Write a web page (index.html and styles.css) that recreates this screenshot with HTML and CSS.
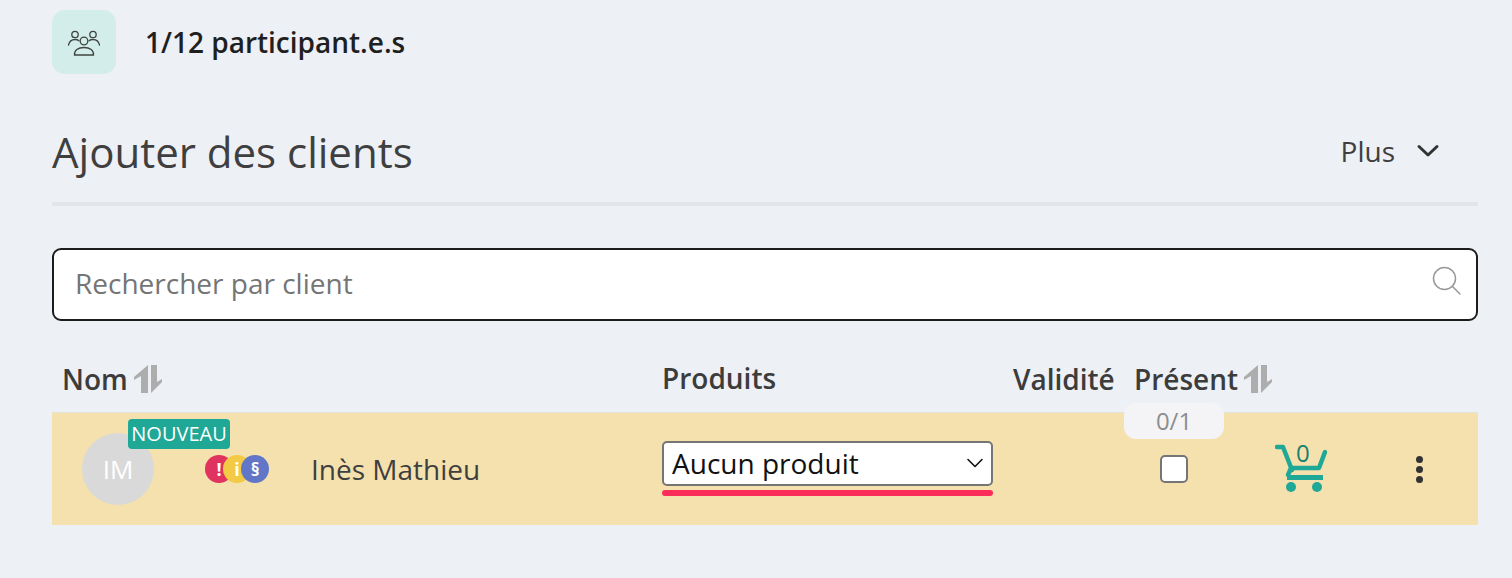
FILE: index.html
```html
<!DOCTYPE html>
<html lang="fr">

<head>
    <meta charset="UTF-8">
    <title>Ajouter des clients</title>
    <link rel="stylesheet" href="styles.css">
</head>

<body>
    <div class="participants">
        <div class="participants-icon">
            <svg width="34" height="30" viewBox="0 0 34 30" fill="none" stroke="#3f4442" stroke-width="1.3" stroke-linecap="round">
                <circle cx="8" cy="7.500" r="3.200"/>
                <circle cx="26" cy="7.500" r="3.200"/>
                <circle cx="17" cy="14" r="3.800"/>
                <path d="M1.500 18c.8-3.500 3.300-5.500 6.500-5.500 1.700 0 3 .4 4 1.200"/>
                <path d="M32.500 18c-.8-3.500-3.300-5.500-6.500-5.500-1.700 0-3 .4-4 1.200"/>
                <path d="M7.500 28c-.5-4.500 3.500-7.500 9.500-7.500s10 3 9.500 7.500z"/>
            </svg>
        </div>
        <span class="participants-count">1/12 participant.e.s</span>
    </div>

    <div class="title-bar">
        <h1>Ajouter des clients</h1>
        <div class="more">
            <span>Plus</span>
            <svg width="24" height="14" viewBox="0 0 24 14" fill="none" stroke="#333" stroke-width="3" stroke-linecap="round" stroke-linejoin="round">
                <path d="M3 2.500l9 8.500 9-8.500"/>
            </svg>
        </div>
    </div>

    <div class="search">
        <span class="search-placeholder">Rechercher par client</span>
        <svg width="30" height="30" viewBox="0 0 30 30" fill="none" stroke="#999" stroke-width="1.500" stroke-linecap="round">
            <circle cx="12.500" cy="12.500" r="11"/>
            <path d="M20.500 20.500l7.500 7.500"/>
        </svg>
    </div>

    <div class="table-head">
        <div class="col-name th">Nom
            <svg class="sort" width="28" height="28" viewBox="0 0 28 28" fill="#adadad">
                <path d="M14 0v28H7V11l-7 4v-3z"/>
                <path d="M17 0h6v17l5-3v3L17 28z"/>
            </svg>
        </div>
        <div class="col-product th">Produits</div>
        <div class="col-validity th">Validité</div>
        <div class="col-present th">Présent
            <svg class="sort" width="28" height="28" viewBox="0 0 28 28" fill="#adadad">
                <path d="M14 0v28H7V11l-7 4v-3z"/>
                <path d="M17 0h6v17l5-3v3L17 28z"/>
            </svg>
        </div>
    </div>

    <div class="client-row">
        <div class="col-name client">
            <div class="avatar">IM<span class="badge-new">NOUVEAU</span></div>
            <div class="flags">
                <span class="flag flag-red">!</span>
                <span class="flag flag-yellow">i</span>
                <span class="flag flag-blue">§</span>
            </div>
            <span class="client-name">Inès Mathieu</span>
        </div>
        <div class="col-product">
            <div class="select">
                <span>Aucun produit</span>
                <svg width="18" height="10" viewBox="0 0 18 10" fill="none" stroke="#111" stroke-width="1.600" stroke-linecap="round" stroke-linejoin="round">
                    <path d="M2 1.500l7 7 7-7"/>
                </svg>
            </div>
            <div class="select-error"></div>
        </div>
        <div class="col-validity"></div>
        <div class="col-present present">
            <span class="present-count">0/1</span>
            <span class="checkbox"></span>
        </div>
        <div class="cart">
            <svg width="54" height="50" viewBox="0 0 54 50" fill="none" stroke="#1fa896" stroke-width="4.500" stroke-linejoin="round" stroke-linecap="round">
                <path d="M2 3h6l9 23"/>
                <path d="M50 8l-6 16H16l-3 7"/>
                <path d="M12 33.500h36" stroke-width="5" stroke-linecap="butt"/>
                <circle cx="16" cy="43" r="5" fill="#1fa896" stroke="none"/>
                <circle cx="42" cy="43" r="5" fill="#1fa896" stroke="none"/>
            </svg>
            <span class="cart-count">0</span>
        </div>
        <div class="row-menu">
            <span></span><span></span><span></span>
        </div>
    </div>
</body>

</html>
```

FILE: styles.css
```css
body {
    margin: 0;
    padding: 10px 34px 0 52px;
    height: 568px;
    overflow: hidden;
    font-family: "Open Sans", "Noto Sans", sans-serif;
    background-color: #edf0f5;
    color: #333;
}

.participants {
    display: flex;
    align-items: center;
    gap: 29px;
}

.participants-icon {
    width: 64px;
    height: 64px;
    border-radius: 13px;
    background: #d3eeea;
    display: flex;
    align-items: center;
    justify-content: center;
}

.participants-count {
    font-size: 28px;
    font-weight: 600;
    color: #1f1f1f;
}

.title-bar {
    display: flex;
    align-items: center;
    justify-content: space-between;
    height: 103px;
    margin-top: 29px;
    margin-bottom: 42px;
    padding-right: 38px;
    padding-bottom: 2px;
    border-bottom: 4px solid #e4e5e8;
    box-sizing: border-box;
}

h1 {
    margin: 0;
    font-size: 42px;
    font-weight: 400;
    color: #3f3f3f;
}

.more {
    display: flex;
    align-items: center;
    gap: 21px;
    font-size: 28px;
    color: #3f3f3f;
    margin-bottom: 2px;
}

.search {
    height: 73px;
    box-sizing: border-box;
    border: 2px solid #1c1c1c;
    border-radius: 9px;
    background: #fff;
    display: flex;
    align-items: center;
    justify-content: space-between;
    padding: 0 14px 8px 21px;
}

.search-placeholder {
    font-size: 28px;
    color: #757575;
    padding-top: 4px;
}

.table-head {
    display: flex;
    align-items: center;
    height: 58px;
    margin-top: 33px;
    padding-bottom: 8px;
    box-sizing: border-box;
}

.th {
    font-size: 28px;
    font-weight: 600;
    color: #3c3c3c;
    display: flex;
    align-items: center;
    gap: 6px;
}

.sort {
    flex: none;
}

.col-name {
    width: 610px;
    flex: none;
    box-sizing: border-box;
}

.th.col-name {
    padding-left: 10px;
}

.col-product {
    width: 351px;
    flex: none;
    box-sizing: border-box;
    padding-bottom: 2px;
}

.col-validity {
    width: 122px;
    flex: none;
}

.col-present {
    width: 78px;
    flex: none;
}

.th.col-present {
    white-space: nowrap;
    margin-left: -1px;
}

.client-row {
    display: flex;
    align-items: center;
    height: 113px;
    background: #f5e1ae;
    border-top: 1px solid #e4e3dc;
    box-sizing: border-box;
}

.client {
    display: flex;
    align-items: center;
    padding-left: 30px;
}

.avatar {
    position: relative;
    width: 72px;
    height: 72px;
    border-radius: 50%;
    background: #d9d9d9;
    color: #fff;
    font-size: 26px;
    display: flex;
    align-items: center;
    justify-content: center;
    flex: none;
}

.badge-new {
    position: absolute;
    left: 46px;
    top: -14px;
    width: 102px;
    height: 30px;
    border-radius: 4px;
    background: #1fa896;
    color: #fff;
    font-size: 20px;
    font-weight: 500;
    line-height: 30px;
    text-align: center;
}

.flags {
    display: flex;
    margin-left: 51px;
    width: 107px;
}

.flag {
    width: 28px;
    height: 28px;
    border-radius: 50%;
    color: #fff;
    font-size: 18px;
    font-weight: 700;
    line-height: 28px;
    text-align: center;
    margin-right: -10px;
    flex: none;
}

.flag-red {
    background: #e0335f;
}

.flag-yellow {
    background: #f2ca45;
}

.flag-blue {
    background: #6276c8;
}

.client-name {
    font-size: 28px;
    color: #3f3f3f;
    margin-left: -1px;
}

.select {
    width: 331px;
    height: 45px;
    box-sizing: border-box;
    border: 2px solid #757575;
    border-radius: 5px;
    background: #fff;
    color: #111;
    font-size: 28px;
    display: flex;
    align-items: center;
    justify-content: space-between;
    padding: 0 7px 0 8px;
}

.select-error {
    width: 331px;
    height: 6px;
    margin-top: 4px;
    border-radius: 3px;
    background: #fb2d5a;
}

.present {
    position: relative;
    height: 100%;
}

.present-count {
    position: absolute;
    left: -11px;
    top: -10px;
    width: 100px;
    height: 36px;
    border-radius: 12px;
    background: #f4f4f6;
    color: #8d8d8d;
    font-size: 24px;
    line-height: 36px;
    text-align: center;
}

.checkbox {
    position: absolute;
    left: 25px;
    top: 42px;
    width: 28px;
    height: 28px;
    box-sizing: border-box;
    border: 2px solid #757575;
    border-radius: 5px;
    background: #fff;
}

.cart {
    position: relative;
    margin-left: 62px;
    width: 54px;
    height: 50px;
    flex: none;
}

.cart-count {
    position: absolute;
    left: 21px;
    top: -8px;
    font-size: 24px;
    color: #16806f;
}

.row-menu {
    margin-left: 87px;
    display: flex;
    flex-direction: column;
    gap: 3px;
}

.row-menu span {
    width: 7px;
    height: 7px;
    border-radius: 50%;
    background: #333;
}
```
